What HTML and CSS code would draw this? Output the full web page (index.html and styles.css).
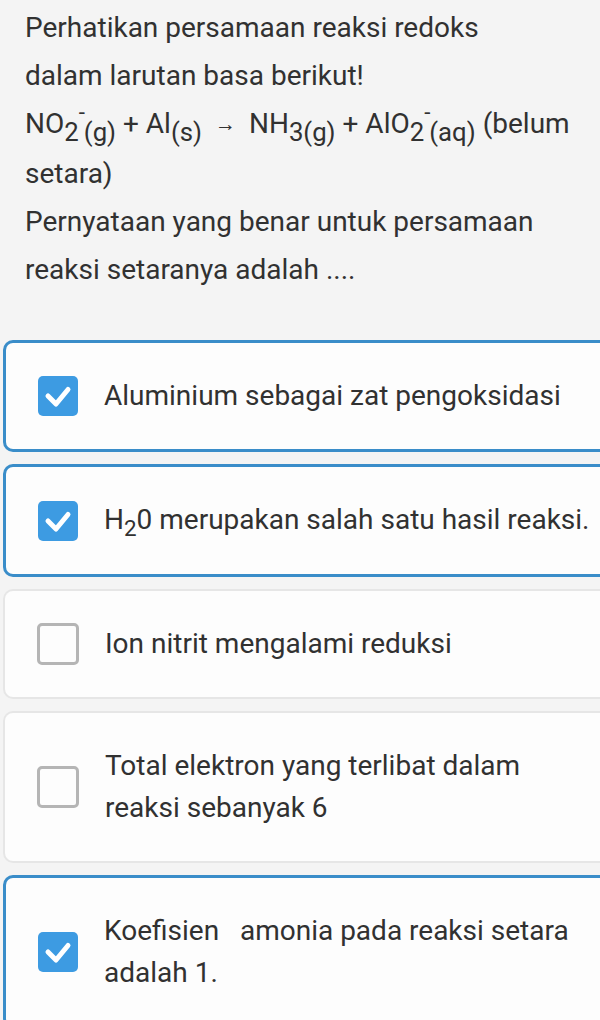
FILE: index.html
```html
<!DOCTYPE html>
<html lang="id">
<head>
    <meta charset="UTF-8">
    <meta name="viewport" content="width=device-width, initial-scale=1.0">
    <title>Soal Redoks</title>
    <link rel="stylesheet" href="styles.css">
</head>
<body>

    <!-- Question -->
    <div class="question">
        <p>Perhatikan persamaan reaksi redoks<br>dalam larutan basa berikut!</p>
        <p>NO<span class="sub">2</span><span class="charge">-</span><span class="sub">(g)</span> + Al<span class="sub">(s)</span> <span class="arrow">&rarr;</span> NH<span class="sub">3(g)</span> + AlO<span class="sub">2</span><span class="charge">-</span><span class="sub">(aq)</span> (belum<br>setara)</p>
        <p>Pernyataan yang benar untuk persamaan<br>reaksi setaranya adalah ....</p>
    </div>

    <!-- Options -->
    <div class="options">
        <div class="option checked">
            <span class="box"><svg viewBox="0 0 40 40"><path d="M10 20l8 8 12-14.5"/></svg></span>
            <div class="label">Aluminium sebagai zat pengoksidasi</div>
        </div>
        <div class="option checked">
            <span class="box"><svg viewBox="0 0 40 40"><path d="M10 20l8 8 12-14.5"/></svg></span>
            <div class="label">H<span class="small">2</span>0 merupakan salah satu hasil reaksi.</div>
        </div>
        <div class="option">
            <span class="box"></span>
            <div class="label">Ion nitrit mengalami reduksi</div>
        </div>
        <div class="option">
            <span class="box"></span>
            <div class="label">Total elektron yang terlibat dalam<br>reaksi sebanyak 6</div>
        </div>
        <div class="option checked">
            <span class="box"><svg viewBox="0 0 40 40"><path d="M10 20l8 8 12-14.5"/></svg></span>
            <div class="label">Koefisien &nbsp; amonia pada reaksi setara<br>adalah 1.</div>
        </div>
    </div>

</body>
</html>
```

FILE: styles.css
```css
body {
    background-color: #f4f4f4;
    font-family: Roboto, "Noto Sans", sans-serif;
    color: #313131;
    margin: 0;
    padding: 0;
    overflow: hidden;
}

.question {
    padding: 4px 0 0 25px;
    font-size: 28px;
    line-height: 48px;
    white-space: nowrap;
}

.question p {
    margin: 0;
}

.sub {
    font-size: 0.92em;
    position: relative;
    top: 0.3em;
}

.charge {
    font-size: 0.8em;
    position: relative;
    top: -0.6em;
    margin-right: -0.05em;
}

.arrow {
    font-size: 0.75em;
    padding: 0 6px;
    position: relative;
    top: -0.1em;
}

.options {
    display: flex;
    flex-direction: column;
    gap: 12px;
    margin-top: 46px;
    padding-left: 3px;
}

.option {
    display: flex;
    align-items: center;
    gap: 26px;
    padding: 32px 0 32px 32px;
    background-color: #fdfdfd;
    border: 2px solid #e6e6e6;
    border-right: none;
    border-radius: 10px 0 0 10px;
    white-space: nowrap;
}

.option.checked {
    border: 3px solid #3a8dc9;
    border-right: none;
}

.box {
    flex: none;
    width: 36px;
    height: 36px;
    border: 3px solid #b5b5b5;
    border-radius: 5px;
}

.option.checked .box {
    width: 40px;
    height: 40px;
    border: none;
    background-color: #3d9be2;
}

.box svg {
    display: block;
    width: 40px;
    height: 40px;
    fill: none;
    stroke: #fff;
    stroke-width: 5;
    stroke-linecap: round;
    stroke-linejoin: round;
}

.label {
    font-size: 28px;
    line-height: 42px;
}

.small {
    font-size: 0.8em;
    position: relative;
    top: 0.3em;
}
```
